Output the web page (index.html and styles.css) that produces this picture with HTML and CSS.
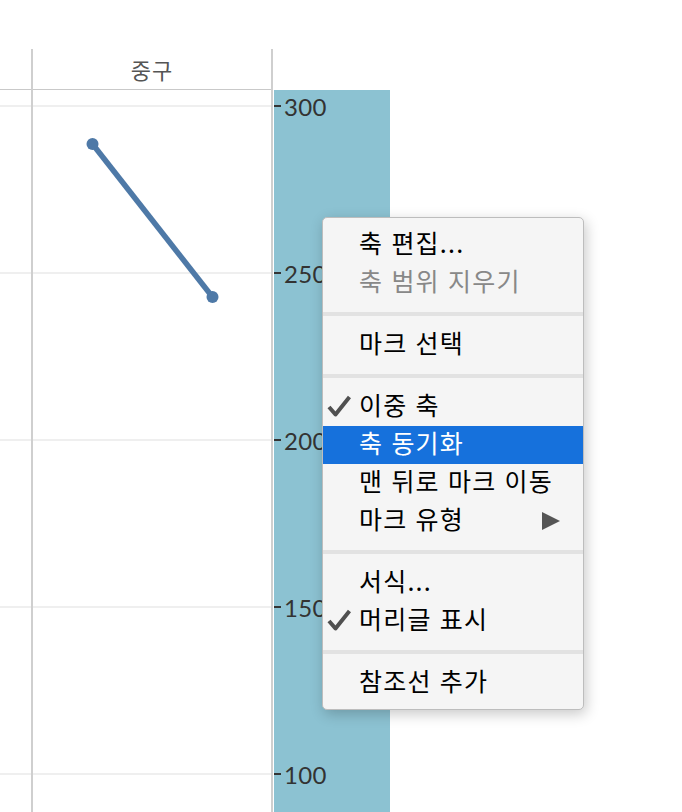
FILE: index.html
```html
<!DOCTYPE html>
<html lang="ko">
<head>
<meta charset="UTF-8">
<meta name="viewport" content="width=device-width, initial-scale=1.0">
<title>중구</title>
<link rel="stylesheet" href="styles.css">
</head>
<body>
  <div class="viz">
    <!-- row header column (empty) -->
    <div class="pane pane-row">
      <div class="col-head"></div>
      <div class="col-body"></div>
    </div>

    <!-- 중구 column with the line mark -->
    <div class="pane pane-district">
      <div class="col-head">중구</div>
      <div class="col-body">
        <svg class="marks" width="238" height="722" viewBox="0 0 238 722">
          <line x1="59.5" y1="54" x2="179.5" y2="207" stroke="#4e79a7" stroke-width="5.5"/>
          <circle cx="59.5" cy="54" r="6" fill="#4e79a7"/>
          <circle cx="179.5" cy="207" r="6" fill="#4e79a7"/>
        </svg>
      </div>
    </div>

    <!-- selected axis -->
    <div class="axis">
      <div class="tick"><span class="tick-mark"></span><span class="tick-label">300</span></div>
      <div class="tick"><span class="tick-mark"></span><span class="tick-label">250</span></div>
      <div class="tick"><span class="tick-mark"></span><span class="tick-label">200</span></div>
      <div class="tick"><span class="tick-mark"></span><span class="tick-label">150</span></div>
      <div class="tick"><span class="tick-mark"></span><span class="tick-label">100</span></div>
    </div>
  </div>

  <!-- context menu for the axis -->
  <div class="menu">
    <div class="menu-item"><span class="check-slot"></span><span class="label">축 편집...</span></div>
    <div class="menu-item disabled"><span class="check-slot"></span><span class="label">축 범위 지우기</span></div>
    <div class="menu-sep"></div>
    <div class="menu-item"><span class="check-slot"></span><span class="label">마크 선택</span></div>
    <div class="menu-sep"></div>
    <div class="menu-item">
      <span class="check-slot">
        <svg width="24" height="22" viewBox="0 0 24 22"><path d="M2 12 L8.5 19.5 L22.5 2" fill="none" stroke="#505050" stroke-width="4" stroke-linejoin="round"/></svg>
      </span>
      <span class="label">이중 축</span>
    </div>
    <div class="menu-item active"><span class="check-slot"></span><span class="label">축 동기화</span></div>
    <div class="menu-item"><span class="check-slot"></span><span class="label">맨 뒤로 마크 이동</span></div>
    <div class="menu-item"><span class="check-slot"></span><span class="label">마크 유형</span><span class="submenu-arrow"></span></div>
    <div class="menu-sep"></div>
    <div class="menu-item"><span class="check-slot"></span><span class="label">서식...</span></div>
    <div class="menu-item">
      <span class="check-slot">
        <svg width="24" height="22" viewBox="0 0 24 22"><path d="M2 12 L8.5 19.5 L22.5 2" fill="none" stroke="#505050" stroke-width="4" stroke-linejoin="round"/></svg>
      </span>
      <span class="label">머리글 표시</span>
    </div>
    <div class="menu-sep"></div>
    <div class="menu-item"><span class="check-slot"></span><span class="label">참조선 추가</span></div>
  </div>
</body>
</html>
```

FILE: styles.css
```css
body {
  margin: 0;
  padding: 0;
  background-color: #fff;
  font-family: "Noto Sans CJK KR", sans-serif;
  position: relative;
}

.viz {
  display: flex;
  height: 812px;
  padding-top: 49px;
  box-sizing: border-box;
  overflow: hidden;
}

.pane {
  display: flex;
  flex-direction: column;
  border-right: 2px solid #cfcfcf;
}

.pane-row {
  width: 31px;
}

.pane-district {
  width: 238px;
}

.col-head {
  height: 40px;
  border-bottom: 1px solid #c9c9c9;
  text-align: center;
  font-size: 22px;
  letter-spacing: 1px;
  line-height: 40px;
  color: #555;
}

.col-body {
  flex: 1;
  background-image: repeating-linear-gradient(
    to bottom,
    transparent 0 15px,
    #efefef 15px 17px,
    transparent 17px 167px
  );
}

.marks {
  display: block;
}

.axis {
  width: 116px;
  margin-left: 1px;
  margin-top: 41px;
  padding-top: 1px;
  background-color: #8cc2d2;
  display: flex;
  flex-direction: column;
  gap: 137px;
}

.tick {
  display: flex;
  align-items: center;
  height: 30px;
}

.tick-mark {
  width: 7px;
  height: 2px;
  background-color: #333;
}

.tick-label {
  margin-left: 3px;
  font-family: Lato, sans-serif;
  font-size: 24px;
  letter-spacing: 0.3px;
  color: #333;
}

/* context menu */
.menu {
  position: absolute;
  left: 322px;
  top: 217px;
  width: 262px;
  box-sizing: border-box;
  padding: 8px 0 7px;
  background-color: #f5f5f5;
  border: 1px solid #bdbdbd;
  border-radius: 5px;
  box-shadow: 2px 4px 14px rgba(0, 0, 0, 0.22);
  font-size: 25px;
  letter-spacing: 1.2px;
  color: #000;
}

.menu-item {
  display: flex;
  align-items: center;
  height: 38px;
}

.menu-item .label {
  padding-bottom: 6px;
  white-space: nowrap;
}

.check-slot {
  width: 36px;
  flex: none;
  display: flex;
  align-items: center;
  padding-left: 4px;
  box-sizing: border-box;
}

.check-slot svg {
  display: block;
  margin-top: -3px;
}

.menu-item.disabled {
  color: #888;
}

.menu-item.active {
  background-color: #1671dc;
  color: #fff;
}

.submenu-arrow {
  margin-left: auto;
  margin-right: 23px;
  width: 0;
  height: 0;
  border-top: 9.5px solid transparent;
  border-bottom: 9.5px solid transparent;
  border-left: 18px solid #555;
}

.menu-sep {
  height: 4px;
  margin: 10px 0;
  background-color: #e2e2e2;
}
```
